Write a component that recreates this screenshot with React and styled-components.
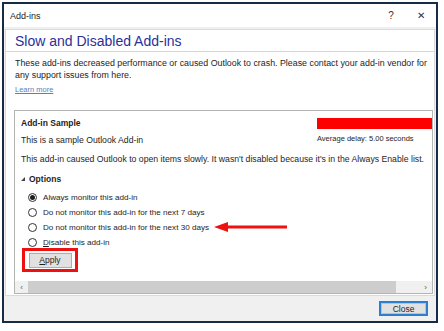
import styled, { createGlobalStyle } from "styled-components";

const Global = createGlobalStyle`
  body {
    margin: 0;
    background: #ffffff;
    font-family: "Liberation Sans", Arial, sans-serif;
    color: #1e1e1e;
  }
`;

const Window = styled.div`
  box-sizing: border-box;
  margin: 2px 0 0 2px;
  width: 436px;
  height: 321px;
  border: 2px solid #142c44;
  background: #f0f0f0;
  display: flex;
  flex-direction: column;
`;

const TitleBar = styled.div`
  height: 23px;
  flex: none;
  background: #ffffff;
  display: flex;
  align-items: center;
  padding: 0 0 0 6px;
  font-size: 9px;
  color: #222;
  .title {
    flex: 1;
  }
  .ctl {
    width: 30px;
    text-align: center;
    font-size: 10px;
    color: #333;
  }
`;

const Panel = styled.div`
  margin: 2px 1px 0 1px;
  height: 267px;
  flex: none;
  background: #ffffff;
  border: 1px solid #dadada;
  box-sizing: border-box;
  display: flex;
  flex-direction: column;
`;

const Heading = styled.h1`
  margin: 0;
  padding: 4px 0 2px 9px;
  font-size: 14px;
  font-weight: normal;
  color: #2b2f9a;
  border-bottom: 1px solid #d6d6d6;
  line-height: 15px;
`;

const Desc = styled.p`
  margin: 5px 0 0 9px;
  font-size: 8.85px;
  line-height: 12px;
  white-space: nowrap;
`;

const LinkText = styled.a`
  margin: 4px 0 0 9px;
  font-size: 7.5px;
  color: #5b7fb8;
  text-decoration: underline;
`;

const AddinBox = styled.div`
  margin: 16px 1px 1px 8px;
  flex: 1;
  border: 1px solid #b4b4b4;
  display: flex;
  flex-direction: column;
`;

const BoxContent = styled.div`
  flex: 1;
  padding: 5px 0 0 6px;
  font-size: 8.7px;
`;

const TopRow = styled.div`
  display: grid;
  grid-template-columns: 1fr 115px;
  column-gap: 4px;
`;

const Bold = styled.div`
  font-weight: bold;
  font-size: 8.5px;
  padding-top: 2px;
`;

const RedBar = styled.div`
  height: 11px;
  margin-top: 2px;
  background: #ff0000;
`;

const Delay = styled.div`
  font-size: 7.5px;
  margin-top: 5px;
`;

const Line = styled.div`
  margin-top: ${(p) => p.$mt || 0}px;
  white-space: nowrap;
`;

const OptionsHead = styled.div`
  display: flex;
  align-items: center;
  gap: 4px;
  margin-top: 10px;
  font-size: 8.5px;
  font-weight: bold;
  .tri {
    width: 0;
    height: 0;
    border-left: 4px solid transparent;
    border-bottom: 4px solid #444;
  }
`;

const RadioList = styled.div`
  display: flex;
  flex-direction: column;
  gap: 5px;
  margin: 8px 0 0 7px;
  font-size: 8.1px;
`;

const RadioRow = styled.div`
  display: flex;
  align-items: center;
  gap: 6px;
  height: 10px;
  position: relative;
`;

const Radio = styled.span`
  box-sizing: border-box;
  width: 9px;
  height: 9px;
  border-radius: 50%;
  border: 1px solid #333;
  display: flex;
  align-items: center;
  justify-content: center;
  &::after {
    content: "";
    width: 5px;
    height: 5px;
    border-radius: 50%;
    background: ${(p) => (p.$checked ? "#1e1e1e" : "transparent")};
  }
`;

const Arrow = styled.svg`
  position: absolute;
  left: 186px;
  top: -1px;
`;

const Highlight = styled.div`
  margin: 1px 0 0 1px;
  width: 56px;
  height: 24px;
  box-sizing: border-box;
  border: 3px solid #ee1111;
  display: flex;
  align-items: center;
  justify-content: center;
`;

const Button = styled.button`
  box-sizing: border-box;
  width: ${(p) => p.$w}px;
  height: ${(p) => p.$h}px;
  padding: 0;
  background: #e1e1e1;
  border: ${(p) => (p.$default ? "2px solid #2a7fd0" : "1px solid #adadad")};
  outline: ${(p) => (p.$default ? "1px solid #a9c7e8" : "none")};
  outline-offset: -3px;
  font-family: "Liberation Sans", Arial, sans-serif;
  font-size: 8.5px;
  color: #1e1e1e;
  u {
    text-decoration: underline;
  }
`;

const ScrollBar = styled.div`
  height: 12px;
  display: flex;
  align-items: center;
  background: #f0f0f0;
  font-size: 8px;
  color: #555;
  .arrow {
    width: 13px;
    text-align: center;
  }
  .track {
    flex: 1;
    height: 12px;
    display: flex;
  }
  .thumb {
    width: 368px;
    background: #cdcdcd;
  }
`;

const Footer = styled.div`
  flex: 1;
  display: flex;
  justify-content: flex-end;
  align-items: center;
  padding-right: 8px;
`;

const options = [
  { label: "Always monitor this add-in", checked: true },
  { label: "Do not monitor this add-in for the next 7 days" },
  { label: "Do not monitor this add-in for the next 30 days", arrow: true },
  { label: "Disable this add-in", key: "D" },
];

export default function App() {
  return (
    <>
      <Global />
      <Window>
        <TitleBar>
          <span className="title">Add-ins</span>
          <span className="ctl">?</span>
          <span className="ctl">✕</span>
        </TitleBar>
        <Panel>
          <Heading>Slow and Disabled Add-ins</Heading>
          <Desc>
            These add-ins decreased performance or caused Outlook to crash. Please contact your add-in vendor for
            <br />
            any support issues from here.
          </Desc>
          <LinkText>Learn more</LinkText>
          <AddinBox>
            <BoxContent>
              <TopRow>
                <div>
                  <Bold>Add-in Sample</Bold>
                  <Line $mt={7}>This is a sample Outlook Add-in</Line>
                </div>
                <div>
                  <RedBar />
                  <Delay>Average delay: 5.00 seconds</Delay>
                </div>
              </TopRow>
              <Line $mt={9}>
                This add-in caused Outlook to open items slowly. It wasn't disabled because it's in the Always Enable list.
              </Line>
              <OptionsHead>
                <span className="tri" />
                Options
              </OptionsHead>
              <RadioList>
                {options.map((o) => (
                  <RadioRow key={o.label}>
                    <Radio $checked={o.checked} />
                    <span>
                      {o.key ? (
                        <>
                          <u>{o.key}</u>
                          {o.label.slice(1)}
                        </>
                      ) : (
                        o.label
                      )}
                    </span>
                    {o.arrow && (
                      <Arrow width="74" height="12" viewBox="0 0 74 12">
                        <path d="M0 6 L14 1 L14 4.5 L73 4.5 L73 7.5 L14 7.5 L14 11 Z" fill="#ee1111" />
                      </Arrow>
                    )}
                  </RadioRow>
                ))}
              </RadioList>
              <Highlight>
                <Button $w={43} $h={15}>
                  <u>A</u>pply
                </Button>
              </Highlight>
            </BoxContent>
            <ScrollBar>
              <span className="arrow">‹</span>
              <div className="track">
                <div className="thumb" />
              </div>
              <span className="arrow">›</span>
            </ScrollBar>
          </AddinBox>
        </Panel>
        <Footer>
          <Button $w={49} $h={15} $default>
            Close
          </Button>
        </Footer>
      </Window>
    </>
  );
}
